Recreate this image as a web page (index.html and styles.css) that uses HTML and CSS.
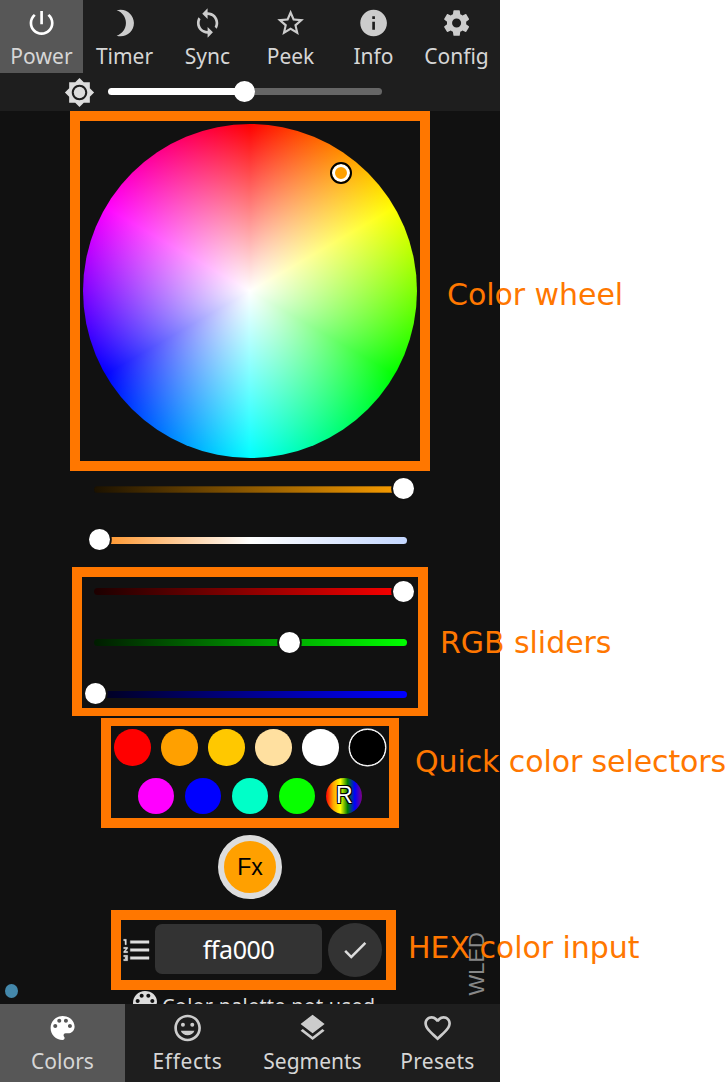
FILE: index.html
```html
<!DOCTYPE html>
<html lang="en">
<head>
<meta charset="utf-8">
<title>WLED</title>
<link rel="stylesheet" href="styles.css">
</head>
<body>
<div class="app">
  <header class="top">
    <nav class="tabs tabs-top">
      <button class="tab active"><svg class="icon" viewBox="0 0 24 24"><path d="M13 3h-2v10h2V3zm4.83 2.17l-1.42 1.42C17.99 7.86 19 9.81 19 12c0 3.87-3.13 7-7 7s-7-3.13-7-7c0-2.19 1.01-4.14 2.58-5.42L6.17 5.17C4.23 6.82 3 9.26 3 12c0 4.97 4.03 9 9 9s9-4.03 9-9c0-2.74-1.23-5.18-3.17-6.83z"/></svg><span class="label power">Power</span></button>
      <button class="tab"><svg class="icon" viewBox="0 0 24 24"><path d="M9 2c-1.05 0-2.05.16-3 .46 4.06 1.27 7 5.06 7 9.54 0 4.48-2.94 8.27-7 9.54.95.3 1.95.46 3 .46 5.52 0 10-4.48 10-10S14.52 2 9 2z"/></svg><span class="label timer">Timer</span></button>
      <button class="tab"><svg class="icon" viewBox="0 0 24 24"><path d="M12 4V1L8 5l4 4V6c3.31 0 6 2.69 6 6 0 1.01-.25 1.97-.7 2.8l1.46 1.46C19.54 15.03 20 13.57 20 12c0-4.42-3.58-8-8-8zm0 14c-3.31 0-6-2.69-6-6 0-1.01.25-1.97.7-2.8L5.24 7.74C4.46 8.97 4 10.43 4 12c0 4.42 3.58 8 8 8v3l4-4-4-4v3z"/></svg><span class="label sync">Sync</span></button>
      <button class="tab"><svg class="icon" viewBox="0 0 24 24"><path d="M22 9.24l-7.19-.62L12 2 9.19 8.63 2 9.24l5.46 4.73L5.82 21 12 17.27 18.18 21l-1.63-7.03L22 9.24zM12 15.4l-3.76 2.27 1-4.28-3.32-2.88 4.38-.38L12 6.1l1.71 4.04 4.38.38-3.32 2.88 1 4.28L12 15.4z"/></svg><span class="label peek">Peek</span></button>
      <button class="tab"><svg class="icon" viewBox="0 0 24 24"><path d="M12 2C6.48 2 2 6.48 2 12s4.48 10 10 10 10-4.48 10-10S17.52 2 12 2zm1 15h-2v-6h2v6zm0-8h-2V7h2v2z"/></svg><span class="label info">Info</span></button>
      <button class="tab"><svg class="icon" viewBox="0 0 24 24"><path d="M19.14 12.94c.04-.3.06-.61.06-.94 0-.32-.02-.64-.07-.94l2.03-1.58c.18-.14.23-.41.12-.61l-1.92-3.32c-.12-.22-.37-.29-.59-.22l-2.39.96c-.5-.38-1.03-.7-1.62-.94l-.36-2.54c-.04-.24-.24-.41-.48-.41h-3.84c-.24 0-.43.17-.47.41l-.36 2.54c-.59.24-1.13.57-1.62.94l-2.39-.96c-.22-.08-.47 0-.59.22L2.74 8.87c-.12.21-.08.47.12.61l2.03 1.58c-.05.3-.09.63-.09.94s.02.64.07.94l-2.03 1.58c-.18.14-.23.41-.12.61l1.92 3.32c.12.22.37.29.59.22l2.39-.96c.5.38 1.03.7 1.62.94l.36 2.54c.05.24.24.41.48.41h3.84c.24 0 .44-.17.47-.41l.36-2.54c.59-.24 1.13-.56 1.62-.94l2.39.96c.22.08.47 0 .59-.22l1.92-3.32c.12-.22.07-.47-.12-.61l-2.01-1.58zM12 15.4a3.4 3.4 0 1 1 0-6.8 3.4 3.4 0 0 1 0 6.8z"/></svg><span class="label config">Config</span></button>
    </nav>
    <div class="brightness">
      <svg class="sun" viewBox="0 0 24 24"><path d="M20 15.31L23.31 12 20 8.69V4h-4.69L12 .69 8.69 4H4v4.69L.69 12 4 15.31V20h4.69L12 23.31 15.31 20H20v-4.69zM12 18c-3.31 0-6-2.69-6-6s2.69-6 6-6 6 2.69 6 6-2.69 6-6 6z"/><circle cx="12" cy="12" r="4.4"/></svg>
      <div class="bri-track"><span class="thumb" style="left:137.3px"></span></div>
    </div>
  </header>

  <main class="main">
    <div class="wheel"><span class="picker"></span></div>
    <div class="sliders">
      <div class="track value"><span class="thumb" style="left:310.2px"></span></div>
      <div class="track kelvin"><span class="thumb" style="left:6.3px"></span></div>
      <div class="track red"><span class="thumb" style="left:310.2px"></span></div>
      <div class="track green"><span class="thumb" style="left:196.2px"></span></div>
      <div class="track blue"><span class="thumb" style="left:2.3px"></span></div>
    </div>
    <div class="swatches">
      <div class="swatch-row">
        <span class="swatch" style="background:#ff0000"></span>
        <span class="swatch" style="background:#ffa000"></span>
        <span class="swatch" style="background:#ffc800"></span>
        <span class="swatch" style="background:#ffe0a0"></span>
        <span class="swatch" style="background:#ffffff"></span>
        <span class="swatch outlined" style="background:#000000"></span>
      </div>
      <div class="swatch-row">
        <span class="swatch" style="background:#ff00ff"></span>
        <span class="swatch" style="background:#0000ff"></span>
        <span class="swatch" style="background:#00ffc8"></span>
        <span class="swatch" style="background:#08ff00"></span>
        <span class="swatch random">R</span>
      </div>
    </div>
    <button class="fx">Fx</button>
    <div class="hex">
      <svg class="list" viewBox="0 0 24 24"><path d="M2 17h2v.5H3v1h1v.5H2v1h3v-4H2v1zm1-9h1V4H2v1h1v3zm-1 3h1.8L2 13.1v.9h3v-1H3.2L5 10.9V10H2v1zm5-6v2h14V5H7zm0 14h14v-2H7v2zm0-6h14v-2H7v2z"/></svg>
      <div class="hex-input"><span>ffa000</span></div>
      <button class="ok"><svg viewBox="0 0 24 24"><path d="M9 16.17L4.83 12l-1.42 1.41L9 19 21 7l-1.41-1.41z"/></svg></button>
    </div>
    <div class="palette-note">
      <svg class="icon" viewBox="0 0 24 24"><path d="M12 3c-4.97 0-9 4.03-9 9s4.03 9 9 9c.83 0 1.5-.67 1.5-1.5 0-.39-.15-.74-.39-1.01-.23-.26-.38-.61-.38-.99 0-.83.67-1.5 1.5-1.5H16c2.76 0 5-2.24 5-5 0-4.42-4.03-8-9-8zm-5.5 9c-.83 0-1.5-.67-1.5-1.5S5.67 9 6.5 9 8 9.67 8 10.5 7.33 12 6.5 12zm3-4C8.67 8 8 7.33 8 6.5S8.67 5 9.5 5s1.5.67 1.5 1.5S10.33 8 9.5 8zm5 0c-.83 0-1.5-.67-1.5-1.5S13.67 5 14.5 5s1.5.67 1.5 1.5S15.33 8 14.5 8zm3 4c-.83 0-1.5-.67-1.5-1.5S16.67 9 17.5 9s1.5.67 1.5 1.5-.67 1.5-1.5 1.5z"/></svg>
      <span>Color palette not used</span>
    </div>
    <span class="status-dot"></span>
    <span class="brand">WLED</span>
  </main>

  <nav class="tabs tabs-bottom">
    <button class="tab active"><svg class="icon" viewBox="0 0 24 24"><path d="M12 3c-4.97 0-9 4.03-9 9s4.03 9 9 9c.83 0 1.5-.67 1.5-1.5 0-.39-.15-.74-.39-1.01-.23-.26-.38-.61-.38-.99 0-.83.67-1.5 1.5-1.5H16c2.76 0 5-2.24 5-5 0-4.42-4.03-8-9-8zm-5.5 9c-.83 0-1.5-.67-1.5-1.5S5.67 9 6.5 9 8 9.67 8 10.5 7.33 12 6.5 12zm3-4C8.67 8 8 7.33 8 6.5S8.67 5 9.5 5s1.5.67 1.5 1.5S10.33 8 9.5 8zm5 0c-.83 0-1.5-.67-1.5-1.5S13.67 5 14.5 5s1.5.67 1.5 1.5S15.33 8 14.5 8zm3 4c-.83 0-1.5-.67-1.5-1.5S16.67 9 17.5 9s1.5.67 1.5 1.5-.67 1.5-1.5 1.5z"/></svg><span class="label colors">Colors</span></button>
    <button class="tab"><svg class="icon" viewBox="0 0 24 24"><path d="M11.99 2C6.47 2 2 6.48 2 12s4.47 10 9.99 10C17.52 22 22 17.52 22 12S17.52 2 11.99 2zM12 20c-4.42 0-8-3.58-8-8s3.58-8 8-8 8 3.58 8 8-3.58 8-8 8zM8.5 11a1.5 1.5 0 1 0 0-3 1.5 1.5 0 0 0 0 3zm7 0a1.5 1.5 0 1 0 0-3 1.5 1.5 0 0 0 0 3zM12 17.5c2.33 0 4.31-1.46 5.11-3.5H6.89c.8 2.04 2.78 3.5 5.11 3.5z"/></svg><span class="label effects">Effects</span></button>
    <button class="tab"><svg class="icon" viewBox="0 0 24 24"><path d="M11.99 18.54l-7.37-5.73L3 14.07l9 7 9-7-1.63-1.27-7.38 5.74zM12 16l7.36-5.73L21 9l-9-7-9 7 1.63 1.27L12 16z"/></svg><span class="label segments">Segments</span></button>
    <button class="tab"><svg class="icon" viewBox="0 0 24 24"><path d="M16.5 3c-1.74 0-3.41.81-4.5 2.09C10.91 3.81 9.24 3 7.5 3 4.42 3 2 5.42 2 8.5c0 3.78 3.4 6.86 8.55 11.54L12 21.35l1.45-1.32C18.6 15.36 22 12.28 22 8.5 22 5.42 19.58 3 16.5 3zm-4.4 15.55l-.1.1-.1-.1C7.14 14.24 4 11.39 4 8.5 4 6.5 5.5 5 7.5 5c1.54 0 3.04.99 3.57 2.36h1.87C13.46 5.99 14.96 5 16.5 5c2 0 3.5 1.5 3.5 3.5 0 2.89-3.14 5.74-7.9 10.05z"/></svg><span class="label presets">Presets</span></button>
  </nav>
</div>

<div class="annotations">
  <div class="frame frame-wheel"></div>
  <div class="frame frame-rgb"></div>
  <div class="frame frame-quick"></div>
  <div class="frame frame-hex"></div>
  <span class="callout callout-wheel">Color wheel</span>
  <span class="callout callout-rgb">RGB sliders</span>
  <span class="callout callout-quick">Quick color selectors</span>
  <span class="callout callout-hex">HEX color input</span>
</div>
</body>
</html>
```

FILE: styles.css
```css
* { box-sizing: border-box; }

body {
  margin: 0;
  position: relative;
  width: 725px;
  height: 1082px;
  overflow: hidden;
  background: #fff;
  font-family: "Noto Sans", sans-serif;
}

button {
  border: 0;
  padding: 0;
  background: none;
  font: inherit;
  color: inherit;
}

svg { display: block; fill: currentColor; flex: none; }

.app {
  width: 500px;
  height: 1082px;
  display: flex;
  flex-direction: column;
  background: #111;
  color: #ddd;
}

/* Tab bars */
.top { height: 111px; background: #1e1e1e; flex: none; }
.tabs { display: grid; background: #1e1e1e; flex: none; }
.tabs-top { grid-template-columns: repeat(6, 83px); height: 73px; }
.tabs-bottom { grid-template-columns: repeat(4, 1fr); height: 78px; }
.tab {
  display: flex;
  flex-direction: column;
  align-items: center;
  padding-top: 7px;
  color: #ccc;
}
.tabs-bottom .tab { padding-top: 8px; }
.tab.active { background: #575757; }
.tab.active .icon { color: #fff; }
.icon { width: 32px; height: 32px; }
.tab .icon { transform: translateX(-0.4px); }
.label {
  margin-top: 3px;
  font-size: 21px;
  line-height: 28px;
  white-space: nowrap;
  color: #d6d6d6;
}
.power { letter-spacing: 0.1px; }
.effects { letter-spacing: 0.6px; }
.presets { letter-spacing: 0.3px; }

/* Brightness row */
.brightness { display: flex; align-items: center; height: 38px; padding-left: 64px; }
.sun { width: 31px; height: 31px; }
.bri-track {
  position: relative;
  width: 274.5px;
  height: 7px;
  margin: -1px 0 0 12.6px;
  border-radius: 4px;
  background: linear-gradient(90deg, #fff 50%, #666 50%);
}
.thumb {
  position: absolute;
  top: 50%;
  width: 21px;
  height: 21px;
  margin: -11px 0 0 -10.5px;
  border-radius: 50%;
  background: #fff;
}

/* Color controls */
.main {
  position: relative;
  height: 893px;
  overflow: hidden;
  display: flex;
  flex-direction: column;
  align-items: center;
  padding-top: 13px;
}
.wheel {
  position: relative;
  flex: none;
  width: 334px;
  height: 334px;
  border-radius: 50%;
  background:
    radial-gradient(closest-side, #fff, rgba(255, 255, 255, 0)),
    conic-gradient(#f00, #ff0, #0f0, #0ff, #00f, #f0f, #f00);
}
.picker {
  position: absolute;
  left: 246.5px;
  top: 38px;
  width: 22px;
  height: 22px;
  border: 2px solid #000;
  border-radius: 50%;
  background: #ffa000;
  box-shadow: inset 0 0 0 3px #fff;
}
.sliders {
  display: flex;
  flex-direction: column;
  gap: 44.3px;
  margin-top: 27.6px;
}
.track {
  position: relative;
  width: 313px;
  height: 7px;
  border-radius: 4px;
}
.track .thumb { box-shadow: 0 0 0 1.8px #111; }
.value { background: linear-gradient(90deg, #1c1200, #ffa000); box-shadow: inset 0 1px rgba(17,17,17,.3), inset 0 -1px rgba(17,17,17,.3); }
.kelvin { background: linear-gradient(90deg, #ff8f1f, #fff 50%, #c4d7ff); }
.red { background: linear-gradient(90deg, #1c0000, #f00); }
.green { background: linear-gradient(90deg, #001c00, #0f0); }
.blue { background: linear-gradient(90deg, #00001c, #00f); }

/* Quick colors */
.swatches {
  display: flex;
  flex-direction: column;
  align-items: center;
  gap: 12.2px;
  margin-top: 31.3px;
}
.swatch-row { display: flex; gap: 10.6px; }
.swatch { width: 36.5px; height: 36.5px; border-radius: 50%; }
.outlined { border: 1.5px solid #fff; box-shadow: 0 0 0 0.4px #fff; }
.random {
  background: linear-gradient(90deg, red, orange, yellow, green, blue, purple);
  font: 23px/35px "Liberation Sans", sans-serif;
  text-align: center;
  color: #fff;
  text-shadow: -1px -1px #000, 1px -1px #000, -1px 1px #000, 1px 1px #000;
}
.fx {
  flex: none;
  width: 64px;
  height: 64px;
  margin-top: 20.7px;
  border: 6.5px solid #ddd;
  border-radius: 50%;
  background: #ffa000;
  color: #000;
  font: 23px/52px "Liberation Sans", sans-serif;
}

/* Hex input */
.hex { display: flex; align-items: center; width: 261px; margin-top: 24px; height: 54px; }
.list { width: 32px; height: 32px; margin-left: 1px; stroke: currentColor; stroke-width: 0.3; }
.hex-input {
  flex: none;
  width: 167px;
  height: 50px;
  margin: -1px 0 0 2.5px;
  border-radius: 7px;
  background: #333;
  color: #fff;
  font-size: 25px;
  line-height: 50px;
  text-align: center;
  letter-spacing: -0.4px;
}
.ok {
  display: flex;
  align-items: center;
  justify-content: center;
  flex: none;
  width: 54px;
  height: 54px;
  margin-left: 6px;
  border-radius: 50%;
  background: #333;
  color: #ddd;
}
.ok svg { width: 30px; height: 30px; }

.palette-note {
  display: flex;
  flex: none;
  width: 242px;
  margin-top: 9.6px;
  font-size: 20px;
  line-height: 28px;
  letter-spacing: 0.2px;
  white-space: nowrap;
}
.palette-note span { margin: 5px 0 0 1px; }

.status-dot {
  position: absolute;
  left: 5px;
  top: 873px;
  width: 13px;
  height: 14px;
  border-radius: 50%;
  background: #4488ab;
}
.brand {
  position: absolute;
  right: 11px;
  bottom: 8px;
  writing-mode: vertical-rl;
  transform: rotate(180deg);
  font: 22px/24px "Liberation Sans", sans-serif;
  color: #888;
}

/* Explanatory overlay */
.annotations { position: absolute; inset: 0; color: #ff7700; }
.frame { position: absolute; border: 10px solid #ff7700; }
.frame-wheel { left: 70px; top: 111px; width: 360px; height: 360px; }
.frame-rgb { left: 72px; top: 567px; width: 356px; height: 149px; border-bottom-width: 8px; }
.frame-quick { left: 101px; top: 718px; width: 298px; height: 110px; border-top-width: 8px; }
.frame-hex { left: 111px; top: 910px; width: 285px; height: 80px; }
.callout {
  position: absolute;
  font: 30px/36px "DejaVu Sans", sans-serif;
  letter-spacing: -0.05px;
  white-space: nowrap;
}
.callout-wheel { left: 447px; top: 277px; }
.callout-rgb { left: 440px; top: 625px; }
.callout-quick { left: 415px; top: 744px; letter-spacing: -0.1px; }
.callout-hex { left: 408px; top: 930px; }
```
